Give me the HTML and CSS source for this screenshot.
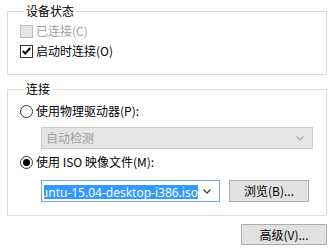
FILE: index.html
```html
<!DOCTYPE html>
<html lang="zh-CN">
<head>
<meta charset="utf-8">
<link rel="stylesheet" href="styles.css">
</head>
<body>
<div class="dialog">
  <fieldset class="group group-status">
    <legend class="group-title">设备状态</legend>
    <div class="opt-row disabled">
      <span class="check check-disabled"></span>
      <span class="opt-label">已连接(C)</span>
    </div>
    <div class="opt-row">
      <span class="check">
        <svg width="9" height="8" viewBox="0 0 9 8"><path d="M0.8 4 L3.3 6.5 L8.2 1" fill="none" stroke="#000" stroke-width="1.9"/></svg>
      </span>
      <span class="opt-label">启动时连接(O)</span>
    </div>
  </fieldset>

  <fieldset class="group group-conn">
    <legend class="group-title">连接</legend>
    <div class="opt-row">
      <span class="radio"></span>
      <span class="opt-label">使用物理驱动器(P):</span>
    </div>
    <div class="combo combo-disabled">
      <span class="combo-text">自动检测</span>
      <svg class="combo-arrow" width="8" height="5" viewBox="0 0 8 5"><path d="M0.5 0.5 L4 4 L7.5 0.5" fill="none" stroke="#b0b0b0" stroke-width="1.3"/></svg>
    </div>
    <div class="opt-row row-iso">
      <span class="radio radio-on"><span class="radio-dot"></span></span>
      <span class="opt-label">使用 ISO 映像文件(M):</span>
    </div>
    <div class="iso-row">
      <div class="combo combo-active">
        <span class="combo-field"><span class="sel">ubuntu-15.04-desktop-i386.iso</span></span>
        <svg class="combo-arrow" width="8" height="5" viewBox="0 0 8 5"><path d="M0.5 0.5 L4 4 L7.5 0.5" fill="none" stroke="#3c3c3c" stroke-width="1.3"/></svg>
      </div>
      <button class="btn btn-browse">浏览(B)...</button>
    </div>
  </fieldset>

  <div class="footer">
    <button class="btn btn-adv">高级(V)...</button>
  </div>
</div>
</body>
</html>
```

FILE: styles.css
```css
html, body {
  margin: 0;
  padding: 0;
  background: #ffffff;
}
body {
  font-family: "Noto Sans CJK SC", "Noto Sans", sans-serif;
  font-size: 12px;
  color: #000;
  width: 333px;
  height: 250px;
  overflow: hidden;
}
.dialog {
  padding: 3px 6px 0 7px;
}
.group {
  margin: 0;
  padding: 0 13px 13px 12px;
  border: 1px solid #dcdcdc;
  min-width: 0;
}
.group-conn {
  margin-top: 6px;
}
.group-title {
  margin-left: 4px;
  padding: 0 2px;
  line-height: 16px;
  height: 16px;
}
.opt-row {
  display: flex;
  align-items: center;
  height: 20px;
  gap: 3px;
}
.group-status .opt-row:first-of-type {
  margin-top: 2px;
}
.group-conn .opt-row:first-of-type {
  margin-top: 4px;
}
.opt-row.disabled .opt-label {
  color: #a0a0a0;
}
.opt-label {
  line-height: 16px;
  white-space: nowrap;
}
.check {
  width: 11px;
  height: 11px;
  border: 1px solid #333;
  background: #fff;
  display: flex;
  align-items: center;
  justify-content: center;
  flex: none;
}
.check-disabled {
  border-color: #bcbcbc;
  background: #e6e6e6;
}
.radio {
  width: 11px;
  height: 11px;
  border: 1px solid #333;
  border-radius: 50%;
  background: #fff;
  display: flex;
  align-items: center;
  justify-content: center;
  flex: none;
}
.radio-dot {
  width: 7px;
  height: 7px;
  border-radius: 50%;
  background: #000;
}
.combo {
  box-sizing: border-box;
  height: 22px;
  display: flex;
  align-items: center;
  border: 1px solid #ccc;
}
.combo-disabled {
  margin: 6px 0 0 21px;
  background: #e5e5e5;
  color: #a0a0a0;
  padding: 0 8px 0 4px;
  justify-content: space-between;
}
.combo-text {
  line-height: 16px;
}
.row-iso {
  margin-top: 3px;
}
.iso-row {
  display: flex;
  align-items: center;
  margin: 8px 0 0 21px;
  gap: 9px;
}
.combo-active {
  width: 179px;
  border-color: #7aa7d8;
  background: #fff;
  padding: 0 8px 0 2px;
}
.combo-field {
  flex: 1;
  overflow: hidden;
  white-space: nowrap;
  height: 16px;
  margin-right: 4px;
}
.sel {
  display: inline-block;
  margin-left: -18px;
  background: #3399ff;
  color: #fff;
  font-family: "Noto Sans", sans-serif;
  font-size: 12px;
  line-height: 16px;
}
.combo-active .combo-arrow {
  flex: none;
}
.btn {
  box-sizing: border-box;
  height: 22px;
  background: #e1e1e1;
  border: 1px solid #adadad;
  font-family: "Noto Sans CJK SC", "Noto Sans", sans-serif;
  font-size: 12px;
  color: #000;
  padding: 0;
  line-height: 18px;
}
.btn-browse {
  width: 80px;
}
.footer {
  display: flex;
  justify-content: flex-end;
  margin-top: 8px;
}
.btn-adv {
  width: 86px;
  height: 21px;
}
```
